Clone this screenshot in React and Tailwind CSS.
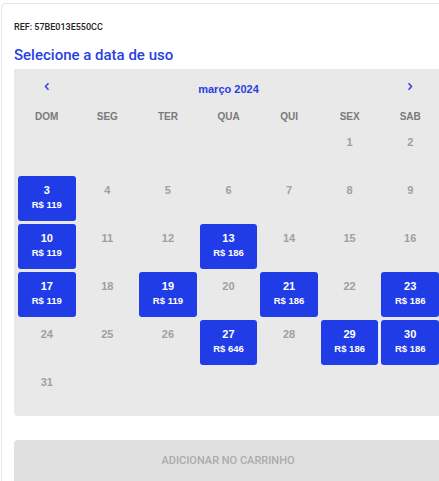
import React from "react";

const priced = {
  3: "119", 10: "119", 17: "119", 19: "119",
  13: "186", 21: "186", 23: "186", 29: "186", 30: "186",
  27: "646",
};

const cal = { fontFamily: "'Liberation Sans', Arial, sans-serif" };

export default function App() {
  const cells = [];
  for (let i = 0; i < 5; i++) cells.push(null);
  for (let d = 1; d <= 31; d++) cells.push(d);
  const days = ["DOM", "SEG", "TER", "QUA", "QUI", "SEX", "SAB"];
  return (
    <div className="w-[439px] h-[481px] overflow-hidden bg-white" style={{ fontFamily: "Roboto, 'Liberation Sans', sans-serif" }}>
      <div className="mt-[3px] ml-[1px] w-[460px] h-[500px] border border-[#e6e6e6] rounded-tl-[5px] pl-[12px] pt-[16px]">
        <div className="text-[9px] leading-[14px] font-medium text-[#222] h-[14px]">REF: 57BE013E550CC</div>
        <div className="mt-[11px] text-[15px] leading-[20px] font-medium text-[#2a3fe0]">Selecione a data de uso</div>
        <div className="mt-[4px] w-[428px] bg-[#e9e9e9] rounded-b-[4px] pl-[4px] pr-[3px] pb-[3px] pt-[12px]" style={cal}>
          <div className="grid grid-cols-7 gap-x-[3px] w-full h-[16px] items-center">
            <div className="flex justify-center items-center h-[16px] -mt-[5px]">
              <svg width="8" height="9" viewBox="0 0 8 9"><path d="M5.5 1.2 L2.5 4.5 L5.5 7.8" fill="none" stroke="#3a48e0" strokeWidth="1.6" /></svg>
            </div>
            <div className="col-span-5 text-center text-[11px] leading-[16px] font-bold text-[#2a3fe0]">março 2024</div>
            <div className="flex justify-center items-center h-[16px] -mt-[5px]">
              <svg width="8" height="9" viewBox="0 0 8 9"><path d="M2.5 1.2 L5.5 4.5 L2.5 7.8" fill="none" stroke="#3a48e0" strokeWidth="1.6" /></svg>
            </div>
          </div>
          <div className="grid grid-cols-7 gap-x-[3px] h-[16px] items-center mt-[12px]">
            {days.map((d) => (
              <div key={d} className="text-center text-[10px] leading-[16px] font-bold text-[#7a7a7a]">{d}</div>
            ))}
          </div>
          <div className="grid grid-cols-7 gap-[3px] mt-[3px]">
            {cells.map((d, i) =>
              d && priced[d] ? (
                <div key={i} className="h-[45px] rounded-[3px] bg-[#1f3ce6] text-white flex flex-col items-center pt-[7px]">
                  <div className="text-[11px] leading-[14px] font-bold">{d}</div>
                  <div className="text-[9.5px] leading-[12px] mt-[2px] font-bold">R$ {priced[d]}</div>
                </div>
              ) : (
                <div key={i} className="h-[45px] flex flex-col items-center pt-[7px]">
                  {d && <div className="text-[11px] leading-[14px] font-bold text-[#a0a0a0]">{d}</div>}
                </div>
              )
            )}
          </div>
        </div>
        <div className="mt-[24px] w-[428px] h-[50px] bg-[#e0e0e0] rounded-tl-[4px] flex justify-center pt-[14px]">
          <div className="text-[11px] leading-[14px] font-medium text-[#ababab]">ADICIONAR NO CARRINHO</div>
        </div>
      </div>
    </div>
  );
}
